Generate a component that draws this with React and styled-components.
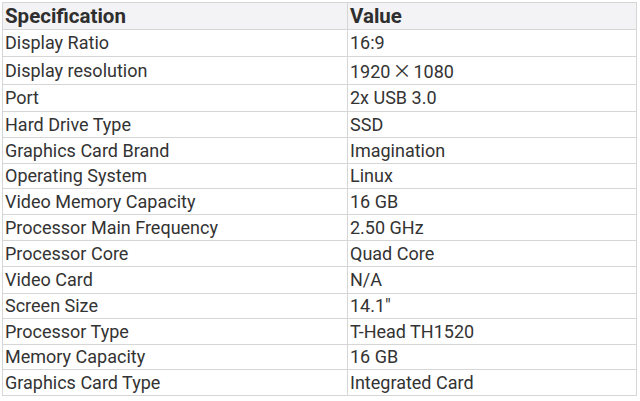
import React from "react";
import styled, { createGlobalStyle } from "styled-components";

const GlobalStyle = createGlobalStyle`
  html, body {
    margin: 0;
    padding: 0;
    background: #ffffff;
  }
  body {
    font-family: Roboto, "Noto Sans CJK SC", sans-serif;
    color: #333333;
  }
`;

const Page = styled.div`
  padding: 2px 3px 0 2px;
`;

const Table = styled.table`
  width: 635px;
  border-collapse: collapse;
  table-layout: fixed;
  border: 1px solid #d6d6d6;
`;

const KeyCol = styled.col`
  width: 345px;
`;

const HeadRow = styled.tr`
  height: 27px;
  background: #f3f3f5;
`;

const HeadCell = styled.th`
  padding: 0 2px;
  text-align: left;
  font-size: 20.5px;
  font-weight: 700;
  color: #2e2e2e;
  border: 1px solid #d6d6d6;
  line-height: 1;
`;

const Row = styled.tr`
  height: ${(p) => p.$h}px;
`;

const Cell = styled.td`
  padding: 0 2px;
  font-size: 18px;
  color: #333333;
  border: 1px solid #d6d6d6;
  line-height: 1;
  white-space: nowrap;
`;

const Times = styled.span`
  font-family: "Noto Sans CJK SC", sans-serif;
  font-size: 19px;
  padding: 0 2px;
`;

const specs = [
  ["Display Ratio", "16:9", 27],
  ["Display resolution", null, 28],
  ["Port", "2x USB 3.0", 27],
  ["Hard Drive Type", "SSD", 26],
  ["Graphics Card Brand", "Imagination", 26],
  ["Operating System", "Linux", 25],
  ["Video Memory Capacity", "16 GB", 26],
  ["Processor Main Frequency", "2.50 GHz", 26],
  ["Processor Core", "Quad Core", 26],
  ["Video Card", "N/A", 27],
  ["Screen Size", "14.1\"", 25],
  ["Processor Type", "T-Head TH1520", 26],
  ["Memory Capacity", "16 GB", 25],
  ["Graphics Card Type", "Integrated Card", 26],
];

export default function App() {
  return (
    <>
      <GlobalStyle />
      <Page>
        <Table>
          <colgroup>
            <KeyCol />
            <col />
          </colgroup>
          <thead>
            <HeadRow>
              <HeadCell>Specification</HeadCell>
              <HeadCell>Value</HeadCell>
            </HeadRow>
          </thead>
          <tbody>
            {specs.map(([name, value, h]) => (
              <Row key={name} $h={h}>
                <Cell>{name}</Cell>
                <Cell>
                  {value ?? (
                    <>
                      1920<Times>×</Times>1080
                    </>
                  )}
                </Cell>
              </Row>
            ))}
          </tbody>
        </Table>
      </Page>
    </>
  );
}
